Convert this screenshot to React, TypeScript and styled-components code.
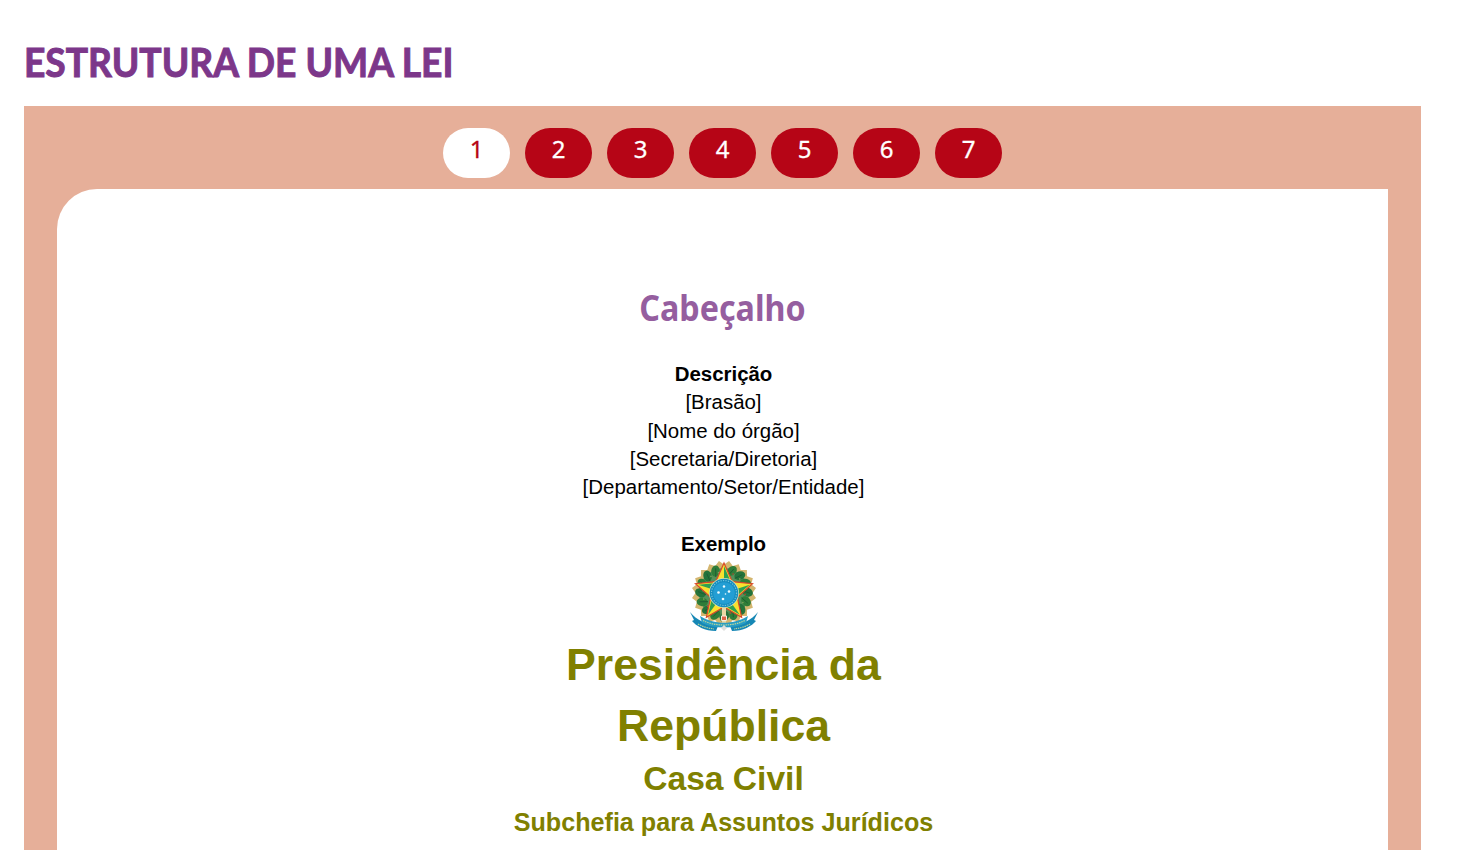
import React from "react";
import styled, { createGlobalStyle } from "styled-components";

const GlobalStyle = createGlobalStyle`
  * { box-sizing: border-box; }
  body { margin: 0; background: #fff; overflow: hidden; }
`;

const Page = styled.main`
  height: 850px;
  padding: 38px 39px 0 24px;
  display: flex;
  flex-direction: column;
  overflow: hidden;
`;

const Title = styled.h1`
  margin: 0;
  height: 68px;
  font: 700 39.5px/48px Lato, sans-serif;
  color: #7c378a;
  -webkit-text-stroke: 1px #7c378a;
  white-space: nowrap;
  transform: scaleX(0.941);
  transform-origin: 0 0;
`;

const Panel = styled.section`
  flex: 1;
  display: flex;
  flex-direction: column;
  background: #e6af99;
  padding: 22px 33px 0;
`;

const Steps = styled.nav`
  display: flex;
  justify-content: center;
  gap: 15px;
  margin-bottom: 11px;
`;

const Step = styled.button<{ $active?: boolean }>`
  width: 67px;
  height: 50px;
  padding: 0 0 8px;
  border: 0;
  border-radius: 25px;
  background: ${(p) => (p.$active ? "#fff" : "#b60516")};
  color: ${(p) => (p.$active ? "#b60516" : "#fff")};
  font: 400 24px/42px "Noto Sans", sans-serif;
  -webkit-text-stroke: 0.3px currentColor;
`;

const Sheet = styled.article`
  flex: 1;
  background: #fff;
  border-top-left-radius: 40px;
  padding-top: 95px;
  text-align: center;
`;

const Heading = styled.h2`
  margin: 0 0 28px;
  font: 700 35px/48px "Noto Sans", sans-serif;
  color: #955e9f;
  transform: scaleX(0.921);
`;

const Content = styled.div`
  padding-left: 2px;
  font-family: "Liberation Sans", Arial, sans-serif;
  color: #000;
`;

const Line = styled.p<{ $bold?: boolean }>`
  margin: 0;
  font-size: 20.45px;
  line-height: 28.3px;
  font-weight: ${(p) => (p.$bold ? 700 : 400)};
`;

const Gap = styled.div`
  height: 28.3px;
`;

const Emblem = styled.svg`
  display: block;
  width: 72px;
  height: 72px;
  margin: 2px auto;
`;

const Office = styled.p<{ $size: number; $line: number }>`
  margin: 0;
  color: #808000;
  font-weight: 700;
  font-size: ${(p) => p.$size}px;
  line-height: ${(p) => p.$line}px;
`;

const polar = (r: number, deg: number) => {
  const a = ((deg - 90) * Math.PI) / 180;
  return `${(36 + r * Math.cos(a)).toFixed(2)},${(33 + r * Math.sin(a)).toFixed(2)}`;
};

const rays = Array.from({ length: 40 }, (_, i) => polar(i % 2 ? 32.4 : 28.5, i * 9)).join(" ");
const star = Array.from({ length: 10 }, (_, i) => polar(i % 2 ? 14 : 30, i * 36)).join(" ");
const leafAngles = Array.from({ length: 15 }, (_, i) => 20 + i * 22.8);

function CoatOfArms() {
  return (
    <Emblem viewBox="0 0 72 72" role="img" aria-label="Brasão da República">
      <polygon points={rays} fill="#d4b66f" />
      <circle cx="36" cy="33" r="25" fill="#55915a" />
      {leafAngles.map((a, i) => (
        <g key={a} transform={`rotate(${a} 36 33)`}>
          <ellipse cx="36" cy="9.5" rx="4.2" ry="5.6" fill={i % 2 ? "#24733a" : "#2f7d38"} transform="rotate(28 36 9)" />
          <path d="M34 15 37 7" stroke="#1b5932" strokeWidth="0.8" />
          <circle cx="38" cy="12" r="0.8" fill={i % 3 ? "#80a35b" : "#b64734"} />
        </g>
      ))}
      <polygon points={star} fill="#f9e12e" stroke="#d8492b" strokeWidth="1.2" />
      {[0, 72, 144, 216, 288].map((a) => (
        <path key={a} d="M36 6v26l6-12z" fill="#2fa152" transform={`rotate(${a} 36 33)`} />
      ))}
      <path d="M34 46h4v18h-4z" fill="#ead8a5" />
      <circle cx="36" cy="33" r="15" fill="#dbe4b7" />
      <circle cx="36" cy="33" r="14.3" fill="#168dbf" />
      <circle cx="36" cy="33" r="12.5" fill="none" stroke="#70c4de" strokeWidth="1.2" strokeDasharray="1.2 1.3" />
      <circle cx="36" cy="33" r="10.8" fill="#239ed4" />
      <g fill="#effcff">
        <circle cx="36" cy="26.5" r="1.2" />
        <circle cx="30.5" cy="32.5" r="1.3" />
        <circle cx="41" cy="31.5" r="1.3" />
        <circle cx="37.5" cy="34" r="0.8" />
        <circle cx="35" cy="39" r="1.3" />
      </g>
      <path d="M2 52c6 8 18 13 28 14l-2 5C17 71 8 66 4 61l2-1z" fill="#1687b5" />
      <path d="M70 52c-6 8-18 13-28 14l2 5c11 0 20-5 24-10l-2-1z" fill="#1687b5" />
      <path d="M12 56c14 9 34 9 48 0l-2 7c-12 6-32 6-44 0z" fill="#289dc4" />
      <path d="M15 60.5c12 6 30 6 42 0M10 64c5 3 10 4 16 5M62 64c-5 3-10 4-16 5" fill="none" stroke="#b8d69a" strokeWidth="1.2" strokeDasharray="1.5 0.8" />
      <path d="M33.5 56h5v4.5h-5z" fill="#df6545" stroke="#f4eee0" />
      <path d="m33 68 3-3 3 3-3 3z" fill="#dddfdd" />
    </Emblem>
  );
}

export default function App() {
  return (
    <>
      <GlobalStyle />
      <Page>
        <Title>ESTRUTURA DE UMA LEI</Title>
        <Panel>
          <Steps>
            {[1, 2, 3, 4, 5, 6, 7].map((n) => (
              <Step key={n} $active={n === 1}>{n}</Step>
            ))}
          </Steps>
          <Sheet>
            <Heading>Cabeçalho</Heading>
            <Content>
              <Line $bold>Descrição</Line>
              <Line>[Brasão]</Line>
              <Line>[Nome do órgão]</Line>
              <Line>[Secretaria/Diretoria]</Line>
              <Line>[Departamento/Setor/Entidade]</Line>
              <Gap />
              <Line $bold>Exemplo</Line>
              <CoatOfArms />
              <Office $size={44.6} $line={61}>Presidência da<br />República</Office>
              <Office $size={33.6} $line={46}>Casa Civil</Office>
              <Office $size={25.15} $line={41}>Subchefia para Assuntos Jurídicos</Office>
            </Content>
          </Sheet>
        </Panel>
      </Page>
    </>
  );
}
